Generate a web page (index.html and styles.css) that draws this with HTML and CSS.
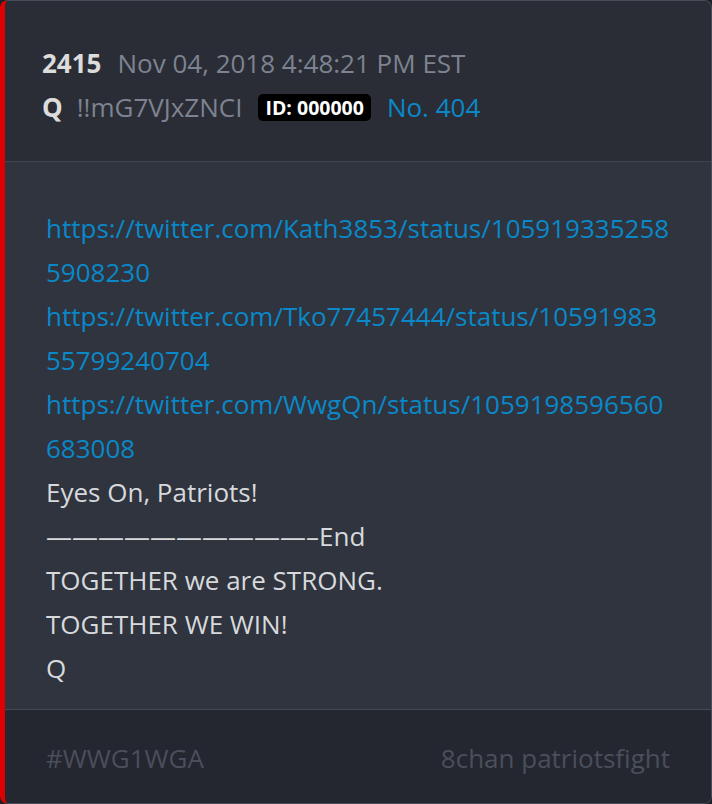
FILE: index.html
```html
<!DOCTYPE html>
<html>
<head>
<meta charset="utf-8">
<link rel="stylesheet" href="styles.css">
</head>
<body>
<div class="card">
  <div class="head">
    <div class="row"><span class="num">2415</span><span class="date">Nov 04, 2018 4:48:21 PM EST</span></div>
    <div class="row"><span class="name">Q</span><span class="trip">!!mG7VJxZNCI</span><span class="badge">ID: 000000</span><span class="no">No. 404</span></div>
  </div>
  <div class="body">
    <a class="link">https://twitter.com/Kath3853/status/1059193352585908230</a>
    <a class="link">https://twitter.com/Tko77457444/status/1059198355799240704</a>
    <a class="link">https://twitter.com/WwgQn/status/1059198596560683008</a>
    <p>Eyes On, Patriots!</p>
    <p>——————————–End</p>
    <p>TOGETHER we are STRONG.</p>
    <p>TOGETHER WE WIN!</p>
    <p>Q</p>
  </div>
  <div class="foot">
    <span>#WWG1WGA</span>
    <span>8chan patriotsfight</span>
  </div>
</div>
</body>
</html>
```
FILE: styles.css
```css
html, body {
  margin: 0;
  padding: 0;
  background: #1d2026;
}
.card {
  box-sizing: border-box;
  width: 712px;
  height: 804px;
  border: 1px solid #474d59;
  border-left: 5px solid #dd0000;
  border-radius: 8px;
  overflow: hidden;
  display: flex;
  flex-direction: column;
  font-family: "Open Sans", sans-serif;
  font-size: 26px;
  line-height: 44px;
}
.head {
  background: #2a2d35;
  padding: 40px 36px 32px 37px;
  border-bottom: 1px solid #3f4550;
}
.row {
  display: flex;
  align-items: center;
  gap: 16px;
}
.num, .name {
  font-weight: 700;
  color: #dcdcdc;
}
.name {
  margin-right: -2px;
}
.date, .trip {
  color: #7d8391;
}
.badge {
  background: #000;
  color: #fff;
  font-weight: 700;
  font-size: 19.5px;
  line-height: 27px;
  padding: 0 7px;
  border-radius: 5px;
}
.no {
  color: #0a88c8;
}
.body {
  flex: 1;
  background: #2f343e;
  padding: 44px 41px 18px 41px;
  border-bottom: 1px solid #434955;
  color: #d8d9dc;
}
.link {
  display: block;
  color: #0a88c8;
  word-break: break-all;
}
.body p {
  margin: 0;
}
.foot {
  background: #24272f;
  height: 93px;
  padding: 2px 41px 0;
  box-sizing: border-box;
  display: flex;
  justify-content: space-between;
  align-items: center;
  color: #4a4f5b;
}
```
